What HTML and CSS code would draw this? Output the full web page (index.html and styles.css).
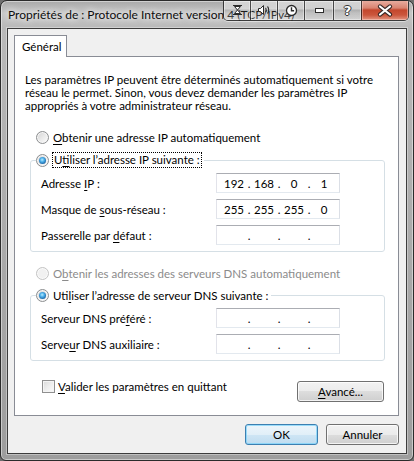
FILE: index.html
```html
<!DOCTYPE html>
<html lang="fr">
<head>
<meta charset="utf-8">
<title>Propriétés de : Protocole Internet version 4 (TCP/IPv4)</title>
<link rel="stylesheet" href="styles.css">
</head>
<body>
<div class="window">
  <div class="titlebar">
    <span class="title">Propriétés de : Protocole Internet version 4 (TCP/IPv4)</span>
    <div class="caption">
      <div class="cbtn extra">
        <svg width="11" height="12" viewBox="0 0 11 12"><path d="M1 1.5h9M1 10.5h9M2.5 2.5h6L5.5 6l3 3.5h-6L5.5 6z" fill="#fff" stroke="#2a2a2a" stroke-width="1"/></svg>
      </div>
      <div class="cbtn extra">
        <svg width="14" height="12" viewBox="0 0 14 12"><path d="M1.5 4.5h2l3-3v9l-3-3h-2z" fill="#fff" stroke="#2a2a2a" stroke-width="1"/><path d="M8.5 4c.8.8.8 3.2 0 4M10.5 2.5c1.6 1.7 1.6 5.3 0 7" fill="none" stroke="#2a2a2a" stroke-width="1.1"/></svg>
      </div>
      <div class="cbtn extra">
        <svg width="13" height="13" viewBox="0 0 13 13"><circle cx="6.5" cy="6.5" r="5" fill="#fff" stroke="#2a2a2a" stroke-width="1.3"/><path d="M6.5 3.2v3.5h2.6" fill="none" stroke="#2a2a2a" stroke-width="1.4"/></svg>
      </div>
      <div class="cbtn min">
        <svg width="9" height="5" viewBox="0 0 9 5"><rect x="0.5" y="0.5" width="8" height="4" fill="#fff" stroke="#2a2a2a"/></svg>
      </div>
      <div class="cbtn help"><span class="qmark">?</span></div>
      <div class="cbtn close">
        <svg width="16" height="13" viewBox="0 0 16 13"><path d="M3 2.5l10 8M13 2.5l-10 8" stroke="#3a2a28" stroke-width="4.2" stroke-linecap="round"/><path d="M3 2.5l10 8M13 2.5l-10 8" stroke="#fff" stroke-width="2.2" stroke-linecap="round"/></svg>
      </div>
    </div>
  </div>

  <div class="client">
    <div class="tabs">
      <div class="tab">Général</div>
    </div>
    <div class="panel">
      <p class="intro">Les paramètres IP peuvent être déterminés automatiquement si votre<br>réseau le permet. Sinon, vous devez demander les paramètres IP<br>appropriés à votre administrateur réseau.</p>

      <div class="option first-option">
        <span class="radio"></span>
        <span class="label"><u>O</u>btenir une adresse IP automatiquement</span>
      </div>

      <fieldset class="group group-ip">
        <legend class="legend">
          <span class="radio checked"></span>
          <span class="label focus">U<u>t</u>iliser l’adresse IP suivante :</span>
        </legend>
        <div class="fields">
          <span class="field-label">Adresse <u>I</u>P :</span>
          <div class="ip"><span class="oct">192</span><span class="dot">.</span><span class="oct">168</span><span class="dot">.</span><span class="oct">0</span><span class="dot">.</span><span class="oct">1</span></div>
          <span class="field-label">Masque de <u>s</u>ous-réseau :</span>
          <div class="ip"><span class="oct">255</span><span class="dot">.</span><span class="oct">255</span><span class="dot">.</span><span class="oct">255</span><span class="dot">.</span><span class="oct">0</span></div>
          <span class="field-label">Passerelle par <u>d</u>éfaut :</span>
          <div class="ip"><span class="oct"></span><span class="dot">.</span><span class="oct"></span><span class="dot">.</span><span class="oct"></span><span class="dot">.</span><span class="oct"></span></div>
        </div>
      </fieldset>

      <div class="option dns-option disabled">
        <span class="radio"></span>
        <span class="label">O<u>b</u>tenir les adresses des serveurs DNS automatiquement</span>
      </div>

      <fieldset class="group group-dns">
        <legend class="legend">
          <span class="radio checked"></span>
          <span class="label">Uti<u>l</u>iser l’adresse de serveur DNS suivante :</span>
        </legend>
        <div class="fields">
          <span class="field-label">Serveur DNS pré<u>f</u>éré :</span>
          <div class="ip"><span class="oct"></span><span class="dot">.</span><span class="oct"></span><span class="dot">.</span><span class="oct"></span><span class="dot">.</span><span class="oct"></span></div>
          <span class="field-label">Serve<u>u</u>r DNS auxiliaire :</span>
          <div class="ip"><span class="oct"></span><span class="dot">.</span><span class="oct"></span><span class="dot">.</span><span class="oct"></span><span class="dot">.</span><span class="oct"></span></div>
        </div>
      </fieldset>

      <div class="panel-footer">
        <div class="check-row">
          <span class="checkbox"></span>
          <span class="label"><u>V</u>alider les paramètres en quittant</span>
        </div>
        <button class="btn advanced"><u>A</u>vancé...</button>
      </div>
    </div>

    <div class="dialog-buttons">
      <button class="btn default">OK</button>
      <button class="btn">Annuler</button>
    </div>
  </div>
</div>
</body>
</html>
```

FILE: styles.css
```css
html, body {
  margin: 0;
  padding: 0;
  background: #6e6e6e;
}

body {
  font-family: "Lato", "Noto Sans", sans-serif;
  font-size: 11.5px;
  color: #000;
}

u {
  text-decoration-thickness: 1px;
  text-underline-offset: 1.5px;
}

.window {
  width: 414px;
  height: 461px;
  box-sizing: border-box;
  border: 1px solid #2b2b2b;
  border-radius: 7px 7px 6px 6px;
  background: linear-gradient(to bottom, #a9a9a9 0, #c6c6c6 12px, #b9b9b9 27px, #a8a8a8 60%, #9d9d9d 100%);
  box-shadow: inset 0 0 0 1px rgba(255, 255, 255, 0.45);
  overflow: hidden;
  display: flex;
  flex-direction: column;
}

/* ---------- title bar ---------- */
.titlebar {
  height: 27px;
  display: flex;
  align-items: flex-start;
  flex-shrink: 0;
}

.title {
  flex: 1;
  min-width: 0;
  white-space: nowrap;
  padding-left: 7px;
  line-height: 27px;
  font-size: 12px;
  color: #0d0d0d;
  text-shadow: 0 0 6px #fff, 0 0 10px rgba(255, 255, 255, 0.8);
}

.caption {
  display: flex;
  height: 20px;
  margin-top: -1px;
  margin-right: 4px;
  border: 1px solid rgba(25, 25, 25, 0.8);
  border-top: none;
  border-radius: 0 0 5px 5px;
  overflow: hidden;
  box-shadow: 0 1px 0 rgba(255, 255, 255, 0.45);
}

.cbtn {
  box-sizing: border-box;
  height: 100%;
  display: flex;
  align-items: center;
  justify-content: center;
  border-left: 1px solid rgba(25, 25, 25, 0.75);
  background: linear-gradient(to bottom, rgba(255, 255, 255, 0.55) 0, rgba(255, 255, 255, 0.3) 45%, rgba(60, 60, 60, 0.12) 50%, rgba(255, 255, 255, 0.3) 100%);
  box-shadow: inset 0 0 0 1px rgba(255, 255, 255, 0.4);
}

.cbtn:first-child {
  border-left: none;
}

.extra {
  width: 27px;
}

.extra:first-child {
  width: 26px;
}

.min {
  width: 29px;
}

.help {
  width: 28px;
}

.qmark {
  font-family: "DejaVu Sans", sans-serif;
  font-weight: bold;
  font-size: 13px;
  color: #fff;
  line-height: 1;
  text-shadow: -1px 0 #333, 1px 0 #333, 0 -1px #333, 0 1px #333;
}

.close {
  width: 47px;
  background: linear-gradient(to bottom, #eab1a4 0, #d98471 40%, #c4472d 50%, #cb563c 75%, #e49581 100%);
  box-shadow: inset 0 0 0 1px rgba(255, 220, 210, 0.45);
}

/* ---------- client area ---------- */
.client {
  flex: 1;
  margin: 0 6px 6px;
  border: 1px solid #3c3c3c;
  background: #f0f0f0;
  box-shadow: 0 0 0 1px rgba(255, 255, 255, 0.35);
  padding: 6px 7px 8px 6px;
  display: flex;
  flex-direction: column;
}

.tabs {
  display: flex;
  height: 21px;
}

.tab {
  position: relative;
  z-index: 1;
  box-sizing: border-box;
  width: 53px;
  height: 22px;
  padding-left: 7px;
  border: 1px solid #898c95;
  border-bottom: none;
  background: #fff;
  line-height: 21px;
}

.panel {
  box-sizing: border-box;
  height: 360px;
  border: 1px solid #898c95;
  background: #fff;
  padding: 16px 13px 0 10px;
}

.intro {
  margin: 0;
  line-height: 13px;
  white-space: nowrap;
}

.option {
  display: flex;
  align-items: center;
  gap: 4px;
  height: 16px;
  margin-left: 11px;
}

.first-option {
  margin-top: 17px;
}

.dns-option {
  margin-top: 13px;
}

.disabled {
  color: #8b8b8b;
}

.radio {
  position: relative;
  flex-shrink: 0;
  box-sizing: border-box;
  width: 13px;
  height: 13px;
  border-radius: 50%;
  border: 1px solid #8c8e90;
  background: linear-gradient(135deg, #d3d3d3 0, #e9e9e9 50%, #fdfdfd 100%);
  box-shadow: inset 0 0 0 1px #f6f6f6;
}

.disabled .radio {
  border-color: #c4c4c4;
  background: #f1f1f1;
  box-shadow: inset 0 0 0 1px #fafafa;
}

.radio.checked::after {
  content: "";
  position: absolute;
  left: 2px;
  top: 2px;
  width: 7px;
  height: 7px;
  border-radius: 50%;
  background: radial-gradient(circle at 45% 40%, #b7ecff 0, #4eb0ea 35%, #135c9e 80%, #0c3e73 100%);
}

.focus {
  outline: 1px dotted #000;
  outline-offset: 0;
  padding: 0 1px;
  line-height: 14px;
}

.group {
  margin: 7px 0 0 5px;
  padding: 5px 44px 6px 10px;
  border: 1px solid #d5dfe5;
  border-radius: 3px;
  min-width: 0;
}

.group-dns {
  margin-top: 6px;
}

.legend {
  display: flex;
  align-items: center;
  gap: 4px;
  height: 16px;
  padding: 0 3px 0 0;
  margin-left: -5px;
}

.fields {
  display: grid;
  grid-template-columns: 1fr 124px;
  grid-auto-rows: 20px;
  row-gap: 6px;
  align-items: center;
}

.ip {
  box-sizing: border-box;
  width: 124px;
  height: 20px;
  display: flex;
  align-items: center;
  padding-left: 5px;
  border: 1px solid;
  border-color: #abadb3 #dbdfe6 #e3e9ef #e2e3ea;
  background: #fff;
}

.oct {
  width: 24px;
  text-align: center;
}

.dot {
  width: 6px;
  text-align: center;
}

.panel-footer {
  display: flex;
  justify-content: space-between;
  align-items: flex-start;
  margin-top: 20px;
}

.check-row {
  display: flex;
  align-items: center;
  gap: 3px;
  height: 16px;
  margin: -3px 0 0 17px;
}

.checkbox {
  box-sizing: border-box;
  width: 13px;
  height: 13px;
  border: 1px solid #8f8f8f;
  background: linear-gradient(135deg, #d9d9d9 0, #ededed 50%, #fbfbfb 100%);
  box-shadow: inset 0 0 0 1px #f4f4f4;
}

.btn {
  box-sizing: border-box;
  height: 21px;
  width: 73px;
  padding: 0;
  font: inherit;
  color: #000;
  border: 1px solid #707070;
  border-radius: 3px;
  background: linear-gradient(to bottom, #f2f2f2 0, #ebebeb 50%, #dddddd 50%, #cfcfcf 100%);
  box-shadow: inset 0 0 0 1px rgba(255, 255, 255, 0.75);
}

.advanced {
  width: 87px;
  margin-right: 1px;
}

.btn.default {
  border-color: #3c7fb1;
  background: linear-gradient(to bottom, #ecf5fb 0, #e1eff8 50%, #cfe6f5 50%, #bfdcf0 100%);
  box-shadow: inset 0 0 0 1px rgba(120, 210, 250, 0.7);
}

.dialog-buttons {
  display: flex;
  justify-content: flex-end;
  gap: 8px;
  margin-top: 8px;
}
```
